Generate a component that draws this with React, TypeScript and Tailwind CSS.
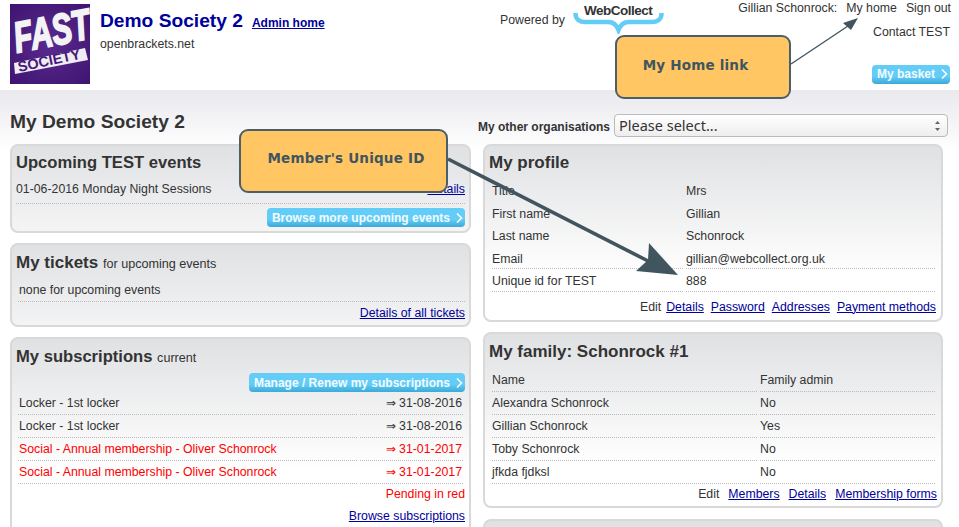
import React from 'react';

const link = 'text-[#00009c] underline';
const panel = 'rounded-lg border-2 border-[#d9d9d9] bg-gradient-to-b from-[#e0e1e3] to-white to-[130px]';
const dotted = 'border-b border-dotted border-[#bbb]';

const BlueButton: React.FC<{ label: string; className?: string }> = ({ label, className }) => (
  <span className={`inline-flex h-[19px] items-center rounded-[4px] bg-gradient-to-b from-[#63cdf8] from-[60%] to-[#3ba9d6] pl-[5px] pr-[2px] text-[12px] font-bold text-[#f2fbff] ${className ?? ''}`}>
    {label}
    <svg width="7" height="12" viewBox="0 0 7 12" className="ml-[6px]" fill="none" stroke="white" strokeWidth="1.6">
      <path d="M1 1.5 5.5 6 1 10.5" />
    </svg>
  </span>
);

const Callout: React.FC<{ label: string; className: string }> = ({ label, className }) => (
  <div className={`absolute flex items-center justify-center rounded-[9px] border-2 border-[#4b5f69] bg-[#ffc663] font-['DejaVu_Sans'] text-[13.5px] font-bold tracking-[0.2px] text-[#41555f] ${className}`}>
    {label}
  </div>
);

const profile = [
  ['Title', 'Mrs'],
  ['First name', 'Gillian'],
  ['Last name', 'Schonrock'],
  ['Email', 'gillian@webcollect.org.uk'],
  ['Unique id for TEST', '888'],
];

const family = [
  ['Name', 'Family admin'],
  ['Alexandra Schonrock', 'No'],
  ['Gillian Schonrock', 'Yes'],
  ['Toby Schonrock', 'No'],
  ['jfkda fjdksl', 'No'],
];

const subs = [
  ['Locker - 1st locker', '⇒ 31-08-2016', false],
  ['Locker - 1st locker', '⇒ 31-08-2016', false],
  ['Social - Annual membership - Oliver Schonrock', '⇒ 31-01-2017', true],
  ['Social - Annual membership - Oliver Schonrock', '⇒ 31-01-2017', true],
] as const;

const App: React.FC = () => {
  return (
    <div className="relative h-[527px] w-[959px] overflow-hidden bg-white font-['Liberation_Sans'] text-[12.3px] text-[#333]">
      {/* Header */}
      <header className="flex h-[90px] bg-white pl-[10px] pt-[4px]">
        <div className="relative h-[80px] w-[80px] shrink-0 bg-[radial-gradient(circle,#5a2a8f,#3e1470)]">
          <svg viewBox="0 0 80 80" width="80" height="80" className="absolute left-0 top-0">
            <path d="M4 59 75 44l3 12L5 70z" fill="#efedf2" />
          </svg>
          <span className="absolute left-[4px] top-[13px] origin-left -rotate-[11deg] scale-x-[0.7] text-[43px] font-bold italic leading-none text-[#f3f2f5] [-webkit-text-stroke:2px_#f3f2f5]">FAST</span>
          <span className="absolute left-[8px] top-[56px] origin-left -rotate-[12deg] text-[14.5px] font-bold leading-none text-[#47197a]">SOCIETY</span>
        </div>
        <div className="ml-[10px] w-[400px] shrink-0 pt-[5px]">
          <div className="flex items-baseline leading-[24px]">
            <span className="text-[19.2px] font-bold text-[#00009c]">Demo Society 2</span>
            <a className={`${link} ml-[9px] text-[12px] font-bold`}>Admin home</a>
          </div>
          <div>openbrackets.net</div>
        </div>
        <div className="flex items-start pt-[7px]">
          <span>Powered by</span>
          <div className="relative ml-[8px] -mt-[11px] h-[34px] w-[92px]">
            <span className="absolute left-[11px] top-[4px] text-[13.5px] font-bold leading-[14px] tracking-[-0.5px] text-[#333]">WebCollect</span>
            <svg width="92" height="34" viewBox="0 0 92 34" fill="none" stroke="#63cdf8" strokeWidth="4.5">
              <path d="M2.5 13v1c0 5 4 8 10 8h23c5 0 8 3 10 8 2-5 5-8 10-8h23c6 0 10-3 10-8v-1" />
            </svg>
          </div>
        </div>
        <div className="ml-auto flex flex-col items-end pr-[9px]">
          <div className="-mr-[1px] -mt-[5px] flex gap-[9px]">
            <span>Gillian Schonrock:</span>
            <span>My home</span>
            <span>Sign out</span>
          </div>
          <div className="mt-[6px]">Contact TEST</div>
          <BlueButton label="My basket" className="mt-[23px] h-[17px]" />
        </div>
      </header>

      {/* Main */}
      <main className="bg-gradient-to-b from-[#e9e9ee] to-white to-[60px] px-[10px] pt-[20px]">
        <div className="flex gap-[12px]">
          {/* Left column */}
          <div className="flex w-[461px] flex-col">
            <h1 className="h-[34px] pt-[1px] text-[19.2px] font-bold leading-[22px]">My Demo Society 2</h1>
            <section className={`${panel} h-[89px] px-[4px] pt-[6px]`}>
              <h2 className="text-[16.6px] font-bold leading-[22px]">Upcoming TEST events</h2>
              <div className={`${dotted} mt-[6px] flex h-[24px] justify-between`}>
                <span>01-06-2016 Monday Night Sessions</span>
                <a className={link}>Details</a>
              </div>
              <div className="mt-[4px] flex justify-end"><BlueButton label="Browse more upcoming events" /></div>
            </section>
            <section className={`${panel} mt-[10px] h-[84px] px-[4px] pt-[7px]`}>
              <h2 className="text-[17px] font-bold leading-[22px]">My tickets <span className="text-[12.6px] font-normal">for upcoming events</span></h2>
              <div className={`${dotted} ml-[2px] mt-[6px] h-[21px] pl-[1px]`}>none for upcoming events</div>
              <div className="mt-[2px] text-right"><a className={link}>Details of all tickets</a></div>
            </section>
            <section className={`${panel} mt-[10px] h-[200px] px-[4px] pt-[7px]`}>
              <h2 className="text-[16.6px] font-bold leading-[22px]">My subscriptions <span className="text-[12.6px] font-normal">current</span></h2>
              <div className="mt-[4px] flex justify-end"><BlueButton label="Manage / Renew my subscriptions" /></div>
              {subs.map(([name, date, pending], i) => (
                <div key={i} className={`ml-[2px] flex h-[23px] items-center gap-[3px] ${pending ? 'text-[#f00]' : ''}`}>
                  <div className={`${dotted} h-[23px] w-[339px] pl-[1px] leading-[22px]`}>{name}</div>
                  <div className={`${dotted} h-[23px] w-[103px] pr-[1px] text-right leading-[22px]`}>{date}</div>
                </div>
              ))}
              <div className="mt-[1px] text-right text-[#f00]">Pending in red</div>
              <div className="mt-[4px] text-right"><a className={link}>Browse subscriptions</a></div>
            </section>
          </div>

          {/* Right column */}
          <div className="flex w-[460px] flex-col">
            <div className="flex h-[34px] items-start">
              <span className="ml-[-5px] w-[136px] shrink-0 pt-[8px] text-[12px] font-bold">My other organisations</span>
              <div className="mt-[4px] flex h-[23px] w-[334px] shrink-0 items-center justify-between rounded-[4px] border border-[#bbb] bg-gradient-to-b from-white to-[#eee] pl-[4px] pr-[6px] font-['Noto_Sans'] text-[14.5px]">
                Please select...
                <svg width="7" height="12" viewBox="0 0 7 12" fill="#666"><path d="M3.5 1 6 4H1zM3.5 11 1 8h5z" /></svg>
              </div>
            </div>
            <section className={`${panel} h-[178px] px-[4px] pt-[6px]`}>
              <h2 className="text-[17px] font-bold leading-[22px]">My profile</h2>
              <div className="ml-[3px] mr-[2px] mt-[5px]">
                {profile.map(([k, v], i) => (
                  <div key={k} className="flex h-[22.5px] gap-[3px] leading-[25px]">
                    <div className={`w-[191px] ${i > 2 ? dotted : ''}`}>{k}</div>
                    <div className={`flex-1 ${i > 2 ? dotted : ''}`}>{v}</div>
                  </div>
                ))}
              </div>
              <div className="mt-[6px] flex justify-end gap-[7px] pr-[1px]">
                <span className="-mr-[2px]">Edit</span>
                <a className={link}>Details</a>
                <a className={link}>Password</a>
                <a className={link}>Addresses</a>
                <a className={link}>Payment methods</a>
              </div>
            </section>
            <section className={`${panel} mt-[10px] h-[176px] px-[4px] pt-[7px]`}>
              <h2 className="text-[17px] font-bold leading-[22px]">My family: Schonrock #1</h2>
              <div className="ml-[3px] mr-[2px] mt-[6px]">
                {family.map(([k, v]) => (
                  <div key={k} className="flex h-[23px] gap-[3px] leading-[22px]">
                    <div className={`${dotted} w-[265px]`}>{k}</div>
                    <div className={`${dotted} flex-1`}>{v}</div>
                  </div>
                ))}
              </div>
              <div className="mt-[1px] flex justify-end gap-[9px]">
                <span>Edit</span>
                <a className={link}>Members</a>
                <a className={link}>Details</a>
                <a className={link}>Membership forms</a>
              </div>
            </section>
            <section className={`${panel} mt-[11px] h-[40px]`} />
          </div>
        </div>
      </main>

      {/* Annotations */}
      <Callout label="My Home link" className="left-[615px] top-[35px] h-[64px] w-[176px] pb-[4px] pr-[15px]" />
      <Callout label="Member's Unique ID" className="left-[239px] top-[129px] h-[64px] w-[209px] pb-[6px] pl-[5px]" />
      <svg className="pointer-events-none absolute left-0 top-0" width="959" height="527" fill="#41555f">
        <path d="M791 64 848 26" stroke="#41555f" strokeWidth="1.3" />
        <path d="M858 18 843 23 851 30z" />
        <path d="M448 159 650 262" stroke="#41555f" strokeWidth="3.6" />
        <path d="M678 275 636 271 648 260 649 243z" />
      </svg>
    </div>
  );
};

export default App;
